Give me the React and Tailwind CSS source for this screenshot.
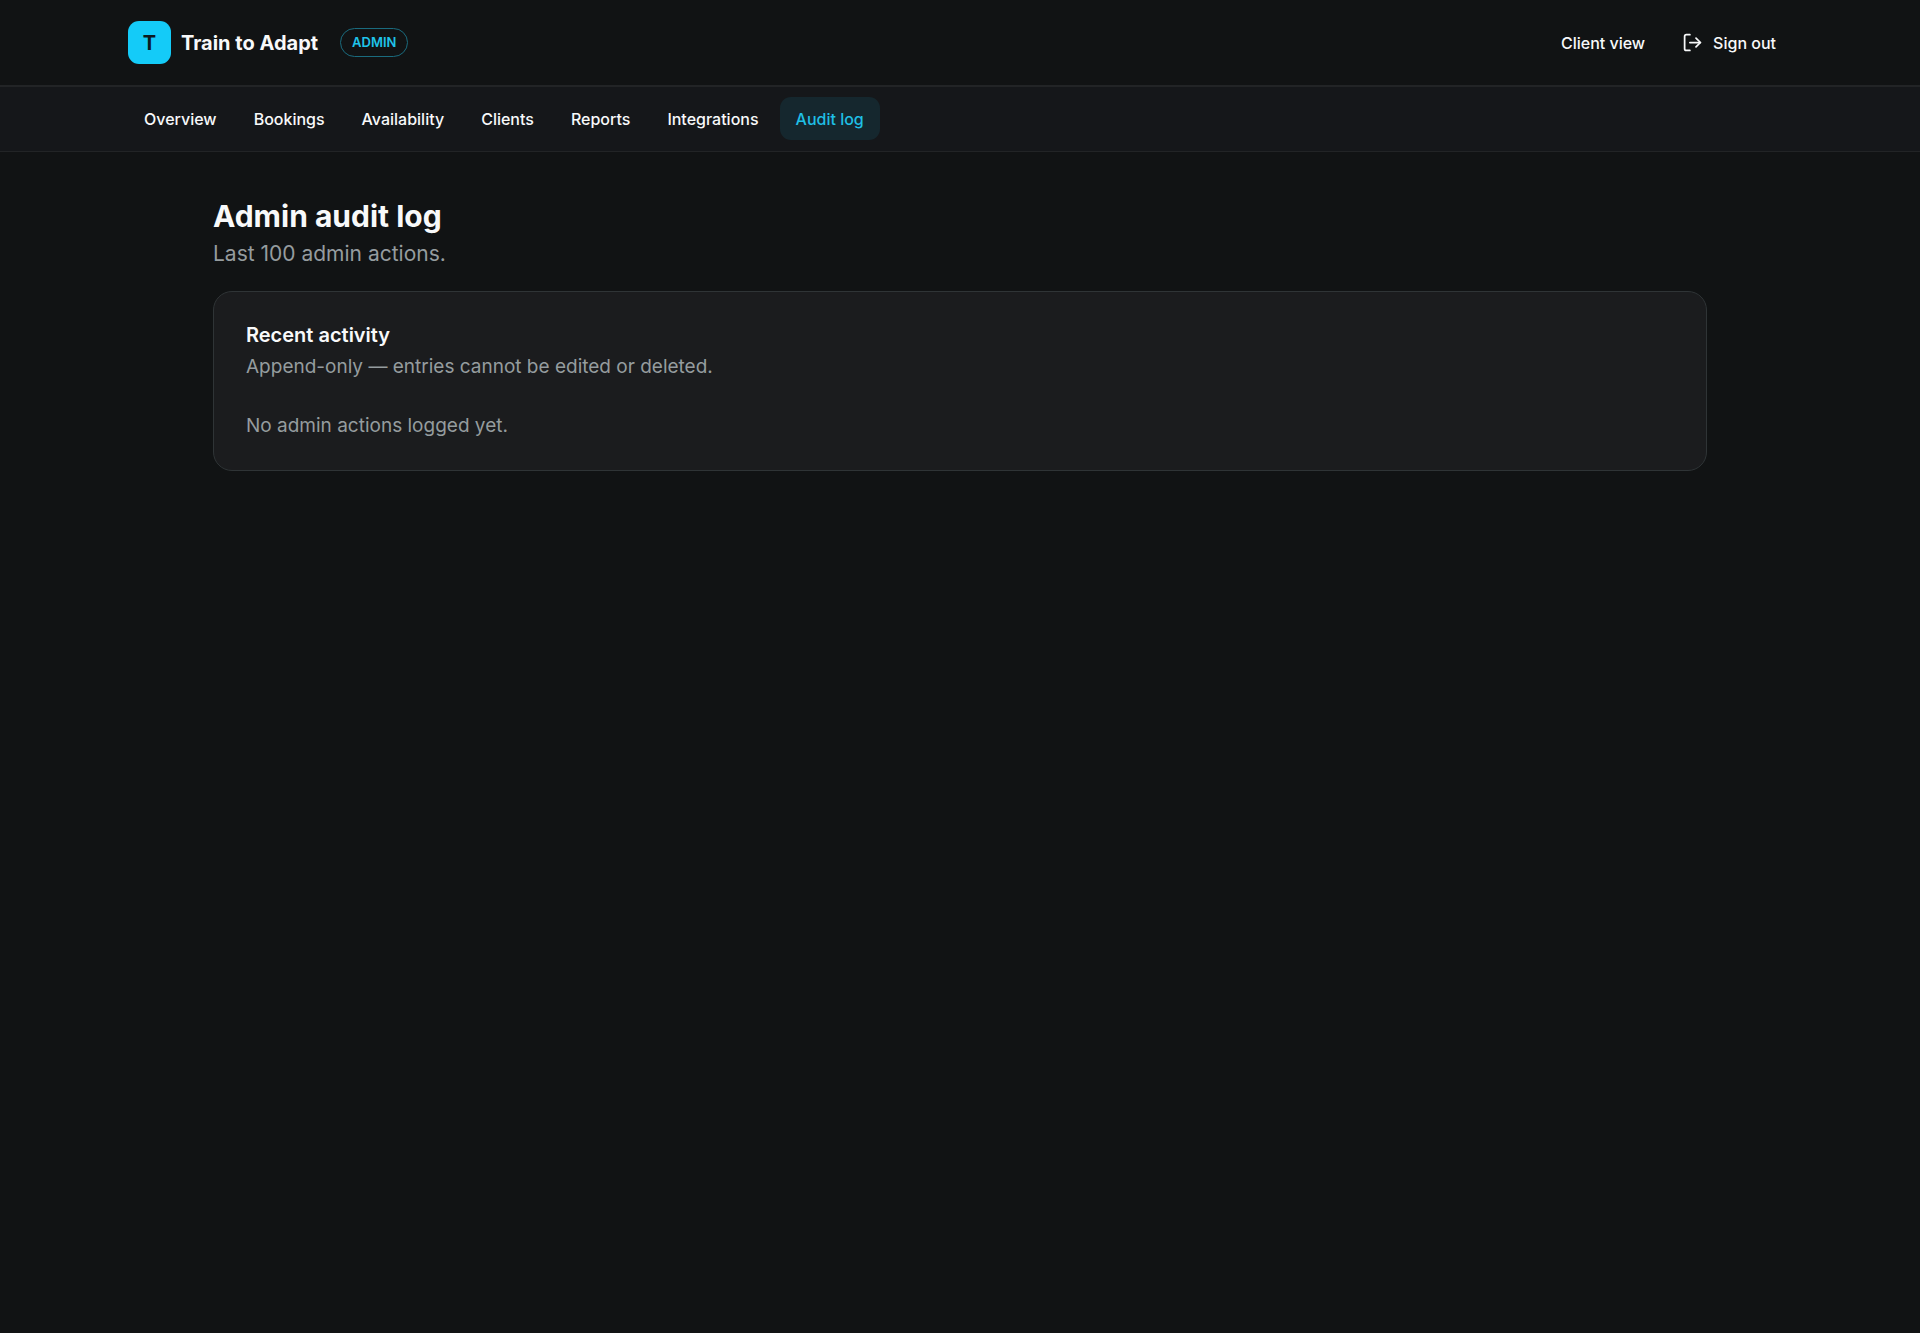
import { LogOut } from "lucide-react";

const NAV_ITEMS = [
  { label: "Overview", href: "#overview" },
  { label: "Bookings", href: "#bookings" },
  { label: "Availability", href: "#availability" },
  { label: "Clients", href: "#clients" },
  { label: "Reports", href: "#reports" },
  { label: "Integrations", href: "#integrations" },
  { label: "Audit log", href: "#audit-log", active: true },
];

export default function App() {
  return (
    <div className="min-h-screen bg-[#111314] font-['Inter',sans-serif] text-[#f8f9fa]">
      <Header />
      <AdminNav />
      <AuditLogPage />
    </div>
  );
}

function Header() {
  return (
    <header className="border-b-2 border-[#222426]">
      <div className="mx-auto flex h-[85px] max-w-[1664px] items-center justify-between">
        <div className="flex items-center">
          <a href="#home" className="flex items-center gap-[10px]">
            <span className="flex size-[43px] items-center justify-center rounded-[11px] bg-[#14cbf8] text-[20px] font-bold text-[#0c1a1f]">
              T
            </span>
            <span className="text-[20px] font-bold">Train to Adapt</span>
          </a>
          <span className="ml-[22px] rounded-full border border-[#1a6b7e] px-[11px] py-1 text-[13px] leading-[19px] font-semibold text-[#1fc3ea]">
            ADMIN
          </span>
        </div>
        <div className="flex items-center gap-[5px] text-[16px] leading-[22px] font-medium">
          <a href="#client" className="flex h-[43px] items-center px-4 hover:text-white">
            Client view
          </a>
          <button type="button" className="flex h-[43px] items-center gap-[10px] px-4 hover:text-white">
            <LogOut size={21} />
            Sign out
          </button>
        </div>
      </div>
    </header>
  );
}

function AdminNav() {
  return (
    <nav className="border-b border-[#222426] bg-[#15171a]">
      <div className="mx-auto flex max-w-[1664px] items-center gap-[5px] pt-[10px] pb-[11px]">
        {NAV_ITEMS.map((item) => (
          <a
            key={item.label}
            href={item.href}
            aria-current={item.active ? "page" : undefined}
            className={`flex h-[43px] items-center rounded-[11px] px-4 text-[16px] leading-[22px] font-medium ${
              item.active ? "bg-[#15272e] text-[#1fbfe5]" : "hover:bg-white/5"
            }`}
          >
            {item.label}
          </a>
        ))}
      </div>
    </nav>
  );
}

function AuditLogPage() {
  return (
    <main className="mx-auto max-w-[1494px] pt-[43px]">
      <h1 className="text-[30px] leading-[43px] font-bold">Admin audit log</h1>
      <p className="text-[21px] leading-8 text-[#959c9f]">Last 100 admin actions.</p>
      <section className="mt-[21px] rounded-[19px] border border-[#2f3436] bg-[#1b1c1e] px-8 pt-7 pb-[29px]">
        <h2 className="text-[20px] leading-[31px] font-semibold">Recent activity</h2>
        <p className="text-[19px] leading-[31px] text-[#959c9f]">Append-only — entries cannot be edited or deleted.</p>
        <p className="mt-7 text-[19px] leading-[31px] text-[#959c9f]">No admin actions logged yet.</p>
      </section>
    </main>
  );
}
